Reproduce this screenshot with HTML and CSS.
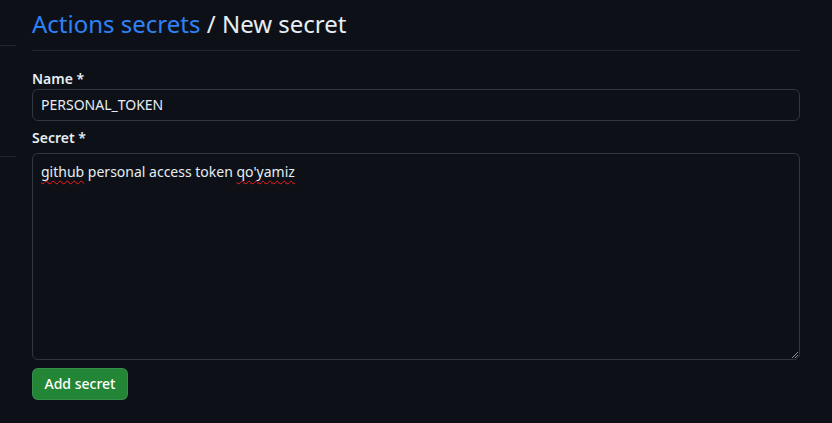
FILE: index.html
```html
<!DOCTYPE html>
<html lang="en">
<head>
<meta charset="utf-8">
<title>New secret</title>
<link rel="stylesheet" href="styles.css">
</head>
<body>
<div class="layout">
  <aside class="sidebar">
    <div class="side-item first"></div>
    <div class="side-item second"></div>
  </aside>
  <main class="main">
    <div class="subhead">
      <h2 class="subhead-heading"><a class="link" href="#">Actions secrets</a> / New secret</h2>
    </div>
    <form class="form">
      <div class="form-group">
        <label class="label">Name *</label>
        <div class="input">PERSONAL_TOKEN</div>
      </div>
      <div class="form-group second-group">
        <label class="label">Secret *</label>
        <div class="textarea">
          <span class="misspelled">github</span> personal access token <span class="misspelled">qo'yamiz</span>
          <svg class="grip" width="7" height="7" viewBox="0 0 7 7"><path d="M1 7L7 1M4 7L7 4" stroke="#8b949e" stroke-width="1"/></svg>
        </div>
      </div>
      <button type="button" class="btn">Add secret</button>
    </form>
  </main>
</div>
</body>
</html>
```

FILE: styles.css
```css
html, body {
  margin: 0;
  padding: 0;
  background: #0d1117;
  color: #e6edf3;
  font-family: "Noto Sans", "Open Sans", sans-serif;
  font-size: 14px;
  line-height: 20px;
}
.layout {
  display: flex;
  height: 423px;
}
.sidebar {
  width: 16px;
  flex: none;
  display: flex;
  flex-direction: column;
}
.side-item {
  border-bottom: 1px solid #21262d;
}
.side-item.first { height: 45px; }
.side-item.second { height: 110px; }
.main {
  flex: 1;
  margin: 0 32px 0 16px;
}
.subhead {
  padding-top: 6px;
  padding-bottom: 8px;
  border-bottom: 1px solid #21262d;
}
.subhead-heading {
  margin: 0;
  font-size: 24px;
  line-height: 36px;
  font-weight: 400;
  color: #e6edf3;
}
.link {
  color: #2f81f7;
  text-decoration: none;
}
.form {
  display: flex;
  flex-direction: column;
  align-items: flex-start;
}
.form-group {
  align-self: stretch;
  display: flex;
  flex-direction: column;
  margin-top: 18px;
}
.form-group.second-group {
  margin-top: 7px;
}
.label {
  font-weight: 600;
  font-size: 14px;
  line-height: 20px;
  margin-bottom: 0;
}
.second-group .label {
  margin-bottom: 5px;
}
.input {
  height: 32px;
  box-sizing: border-box;
  border: 1px solid #30363d;
  border-radius: 6px;
  padding: 5px 8px;
  font-size: 14px;
  line-height: 20px;
  color: #e6edf3;
  background: #0d1117;
}
.textarea {
  position: relative;
  height: 207px;
  box-sizing: border-box;
  border: 1px solid #30363d;
  border-radius: 6px;
  padding: 8px 8px;
  font-size: 14px;
  line-height: 20px;
  color: #e6edf3;
}
.misspelled {
  text-decoration: underline wavy #ff1a1a;
  text-decoration-thickness: 1px;
  text-underline-offset: 3px;
}
.grip {
  position: absolute;
  right: 1px;
  bottom: 1px;
}
.btn {
  margin-top: 8px;
  height: 32px;
  padding: 0 11.5px;
  border: 1px solid rgba(240, 246, 252, 0.1);
  border-radius: 6px;
  background: #238636;
  color: #ffffff;
  font-family: "Noto Sans", "Open Sans", sans-serif;
  font-size: 14px;
  font-weight: 500;
  line-height: 20px;
}
```
